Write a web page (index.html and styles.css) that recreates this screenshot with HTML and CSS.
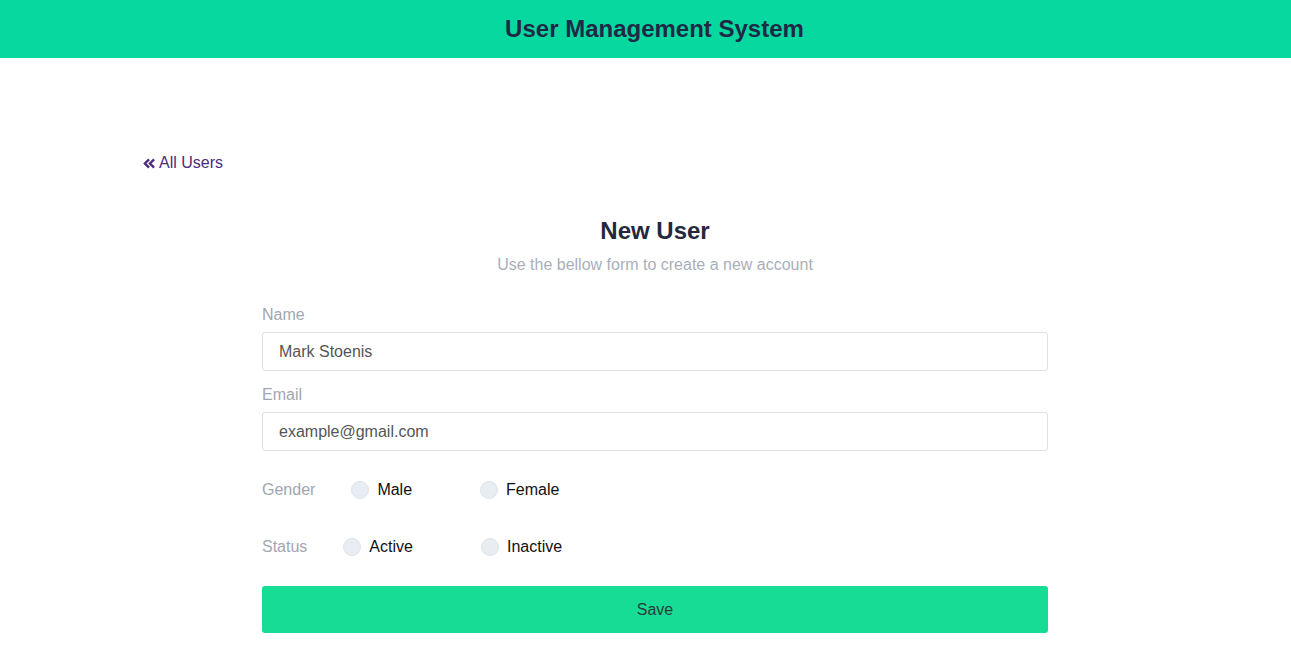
FILE: index.html
```html
<!DOCTYPE html>
<html>
<head>
<meta charset="utf-8">
<link rel="stylesheet" href="styles.css">
</head>
<body>
<header class="topbar">
  <h1 class="brand">User Management System</h1>
</header>
<main class="page">
  <a class="back-link" href="#">
    <svg class="back-icon" viewBox="0 0 14 12" width="13" height="11"><path d="M6.5 1.5 L2 6 L6.5 10.5 M12 1.5 L7.5 6 L12 10.5" fill="none" stroke="currentColor" stroke-width="2.6" stroke-linejoin="miter"/></svg>All Users
  </a>
  <section class="form-wrap">
    <div class="form-head">
      <h2 class="form-title">New User</h2>
      <p class="form-sub">Use the bellow form to create a new account</p>
    </div>
    <form class="form">
      <div class="field">
        <label class="field-label">Name</label>
        <input class="field-input" type="text" value="Mark Stoenis">
      </div>
      <div class="field">
        <label class="field-label">Email</label>
        <input class="field-input" type="text" placeholder="example@gmail.com">
      </div>
      <div class="radio-row row-gender">
        <span class="radio-label">Gender</span>
        <label class="option"><span class="radio"></span>Male</label>
        <label class="option"><span class="radio"></span>Female</label>
      </div>
      <div class="radio-row row-status">
        <span class="radio-label">Status</span>
        <label class="option"><span class="radio"></span>Active</label>
        <label class="option"><span class="radio"></span>Inactive</label>
      </div>
      <button class="save-btn" type="button">Save</button>
    </form>
  </section>
</main>
</body>
</html>
```
FILE: styles.css
```css
* { box-sizing: border-box; }
body {
  margin: 0;
  font-family: "Liberation Sans", Arial, sans-serif;
  background: #fff;
}
.topbar {
  height: 58px;
  background: #07d8a0;
  display: flex;
  align-items: center;
  justify-content: center;
}
.brand {
  margin: 0;
  font-size: 24px;
  font-weight: bold;
  color: #1e2a45;
  padding-left: 18px;
}
.page {
  padding: 96px 143px 0 143px;
}
.back-link {
  display: inline-flex;
  align-items: center;
  gap: 3px;
  color: #4c2b7d;
  text-decoration: none;
  font-size: 16px;
}
.back-icon { margin-top: 1px; }
.form-wrap {
  width: 786px;
  margin-left: 119px;
  margin-top: 44px;
}
.form-head { text-align: center; }
.form-title {
  margin: 0;
  font-size: 24px;
  font-weight: bold;
  color: #25283a;
  line-height: 28px;
}
.form-sub {
  margin: 11px 0 0;
  color: #a9afba;
  font-size: 16px;
}
.form { margin-top: 32px; }
.field { margin-bottom: 15px; }
.field-label {
  display: block;
  color: #a1a7b1;
  font-size: 16px;
  line-height: 18px;
  margin-bottom: 8px;
}
.field-input {
  width: 100%;
  height: 39px;
  border: 1px solid #dcdfe3;
  border-radius: 3px;
  padding: 0 16px;
  font: 16px "Liberation Sans", Arial, sans-serif;
  color: #555;
  outline: none;
}
.field-input::placeholder { color: #555; }
.radio-row {
  display: flex;
  align-items: center;
  height: 20px;
  font-size: 16px;
}
.row-gender { margin-top: 29px; }
.row-status { margin-top: 37px; }
.radio-label {
  color: #a1a7b1;
  margin-right: 36px;
}
.option {
  display: inline-flex;
  align-items: center;
  gap: 8px;
  color: #111;
  margin-right: 68px;
}
.radio {
  width: 18px;
  height: 18px;
  border-radius: 50%;
  background: #e8edf2;
  border: 1px solid #dde3ea;
}
.save-btn {
  margin-top: 29px;
  width: 100%;
  height: 47px;
  border: none;
  border-radius: 3px;
  background: #17dc95;
  color: #2a3b3b;
  font: 16px "Liberation Sans", Arial, sans-serif;
}
```
